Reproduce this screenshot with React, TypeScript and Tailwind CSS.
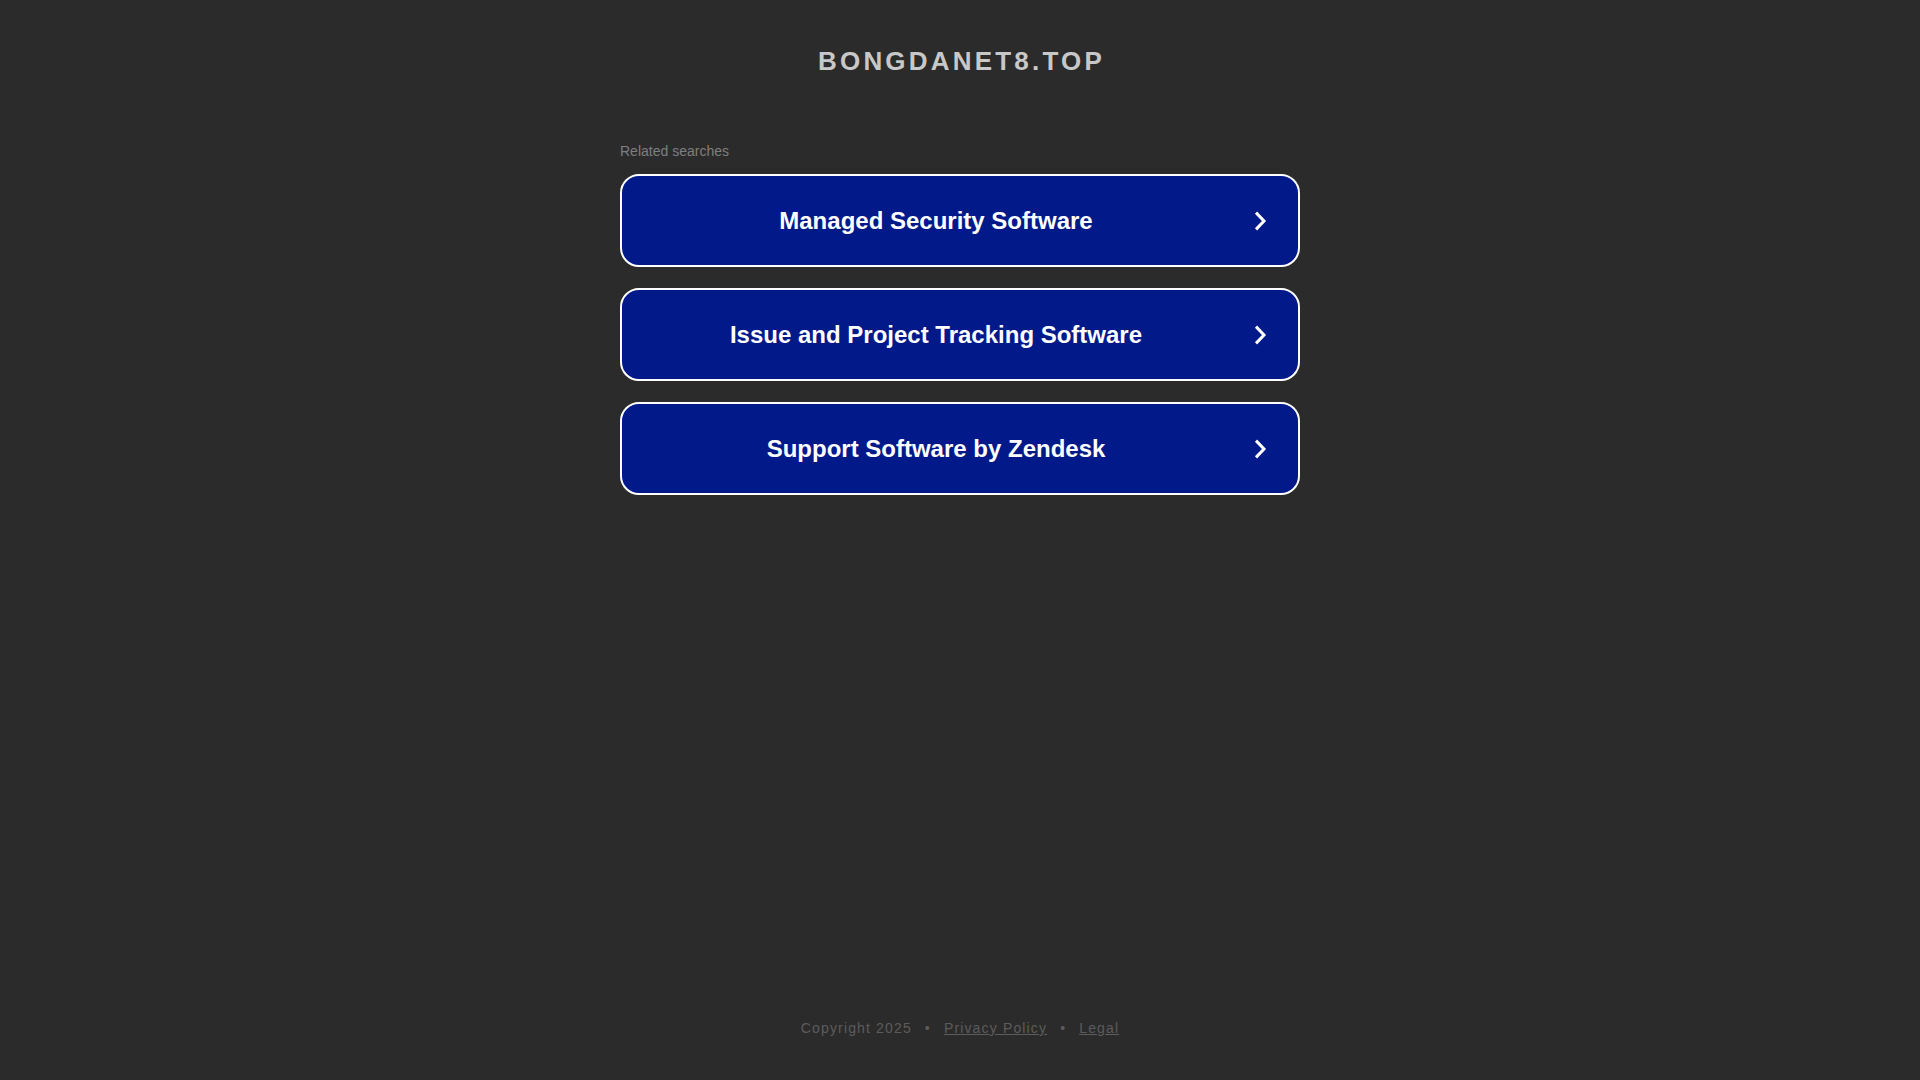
import React from "react";

const items = [
  "Managed Security Software",
  "Issue and Project Tracking Software",
  "Support Software by Zendesk",
];

function Chevron() {
  return (
    <svg width="16" height="24" viewBox="0 0 16 24" className="shrink-0" aria-hidden="true">
      <path d="M4 3.6 L12 12 L4 20.4" fill="none" stroke="#ffffff" strokeWidth="3" strokeLinejoin="miter" />
    </svg>
  );
}

export default function App() {
  return (
    <div
      className="h-screen w-full bg-[#2b2b2b] flex flex-col items-center overflow-hidden"
      style={{ fontFamily: '"Liberation Sans", Arial, sans-serif' }}
    >
      <h1 className="mt-[48px] text-[26px] leading-[26px] font-bold tracking-[3.2px] text-[#c8c8c8] pl-[3px]">
        BONGDANET8.TOP
      </h1>

      <div className="w-[680px] mt-[70px] flex flex-col">
        <div className="text-[14px] leading-[14px] text-[#7f7f7f]">Related searches</div>
        <div className="mt-[16px] flex flex-col gap-[21px]">
          {items.map((t) => (
            <a
              key={t}
              href="#"
              className="h-[93px] flex items-center border-2 border-white rounded-[19px] bg-[#02198a] pr-[30px]"
            >
              <span className="flex-1 mr-[2px] text-center text-white font-bold text-[24px] leading-none">
                {t}
              </span>
              <Chevron />
            </a>
          ))}
        </div>
      </div>

      <div className="mt-auto mb-[45px] flex items-center text-[14px] leading-[14px] tracking-[1.15px] text-[#5c5c5c]">
        <span>Copyright 2025</span>
        <span className="mx-[13px]">•</span>
        <a href="#" className="underline">Privacy Policy</a>
        <span className="mx-[13px]">•</span>
        <a href="#" className="underline">Legal</a>
      </div>
    </div>
  );
}
